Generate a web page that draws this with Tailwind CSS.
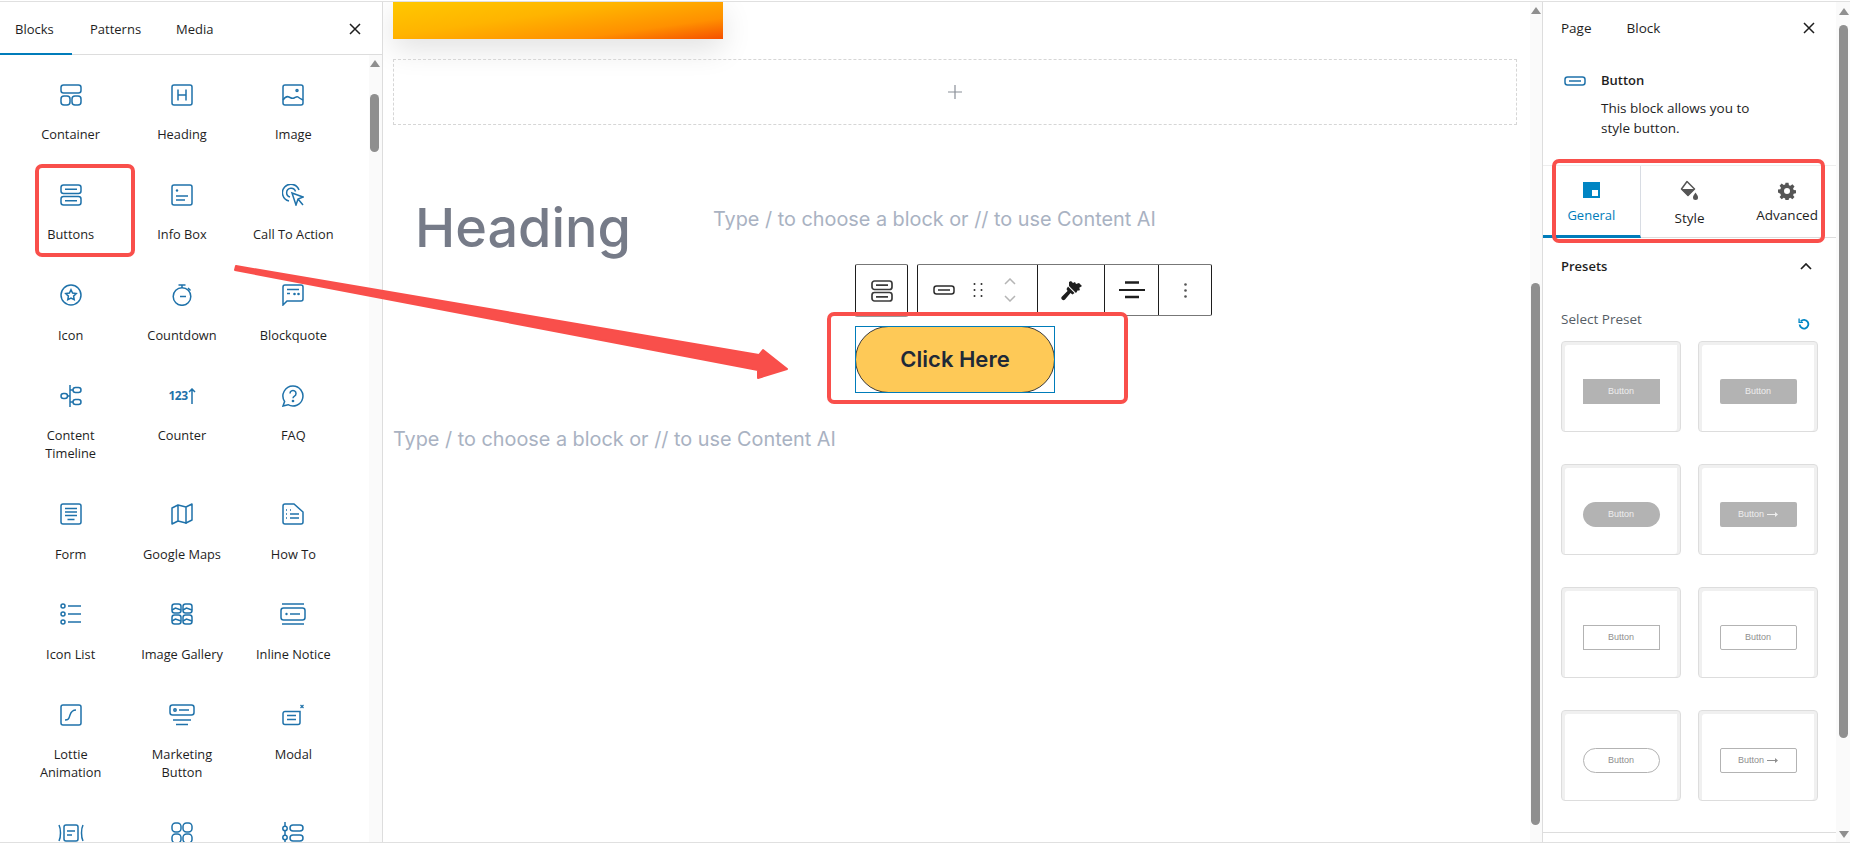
<!DOCTYPE html>
<html lang="en">
<head>
  <meta charset="UTF-8" />
  <title>Button block editor</title>
  <script src="https://cdn.jsdelivr.net/npm/@tailwindcss/browser@4"></script>
</head>
<body class="bg-white">
<div class="relative w-[1850px] h-[847px] overflow-hidden bg-white font-['Open_Sans',sans-serif] text-[13px] leading-[17px] text-[#1e1e1e]">

  <div class="flex h-[842px] mt-px border-t border-b border-[#e0e0e0]">

    <!-- left: block inserter -->
    <aside class="w-[383px] shrink-0 flex flex-col border-r border-[#ddd]">
      <div class="h-[53px] shrink-0 flex border-b border-[#ddd] relative">
        <div class="w-[72px] pl-[15px] pt-[19px] border-b-2 border-[#007cba] h-[53px]">Blocks</div>
        <div class="ml-[18px] pt-[19px]">Patterns</div>
        <div class="ml-[35px] pt-[19px]">Media</div>
        <svg class="absolute left-[349px] top-[21px] w-3 h-3" viewBox="0 0 12 12" fill="none" stroke="#1e1e1e" stroke-width="1.5"><path d="M1 1l10 10M11 1L1 11"/></svg>
      </div>
      <div class="flex flex-1 min-h-0">
        <div class="flex-1 overflow-hidden">
          <div class="grid grid-cols-3 pl-[15px] pr-[20px] pt-[28.5px] gap-y-[40.9px] leading-[18px] text-[12.8px]">
            <div class="flex flex-col items-center text-center">
              <svg class="w-[22px] h-[22px] mb-[19.5px]" viewBox="0 0 22 22" fill="none" stroke="#1f72aa" stroke-width="1.5"><rect x="1" y="1" width="20" height="8" rx="2.5"/><rect x="1" y="12" width="9" height="9" rx="3"/><rect x="12" y="12" width="9" height="9" rx="3"/></svg>
              <span>Container</span>
            </div>
            <div class="flex flex-col items-center text-center">
              <svg class="w-[22px] h-[22px] mb-[19.5px]" viewBox="0 0 22 22" fill="none" stroke="#1f72aa" stroke-width="1.5"><rect x="1" y="1" width="20" height="20" rx="2"/><path d="M7 5.5v11M15 5.5v11M7 11h8"/></svg>
              <span>Heading</span>
            </div>
            <div class="flex flex-col items-center text-center">
              <svg class="w-[22px] h-[22px] mb-[19.5px]" viewBox="0 0 22 22" fill="none" stroke="#1f72aa" stroke-width="1.5"><rect x="1" y="1" width="20" height="20" rx="2"/><circle cx="15" cy="6.5" r="1"/><path d="M1 16c2-3 4-4 6-3s3 2 5 1 3-2 4-1 3 2 5 3"/></svg>
              <span>Image</span>
            </div>

            <div class="flex flex-col items-center text-center">
              <svg class="w-[22px] h-[22px] mb-[19.5px]" viewBox="0 0 22 22" fill="none" stroke="#1f72aa" stroke-width="1.5"><rect x="1" y="1" width="20" height="8.5" rx="2.5"/><rect x="1" y="12.5" width="20" height="8.5" rx="2.5"/><path d="M5 5.2h12M5 16.8h12"/></svg>
              <span>Buttons</span>
            </div>
            <div class="flex flex-col items-center text-center">
              <svg class="w-[22px] h-[22px] mb-[19.5px]" viewBox="0 0 22 22" fill="none" stroke="#1f72aa" stroke-width="1.5"><rect x="1" y="1" width="20" height="20" rx="2"/><circle cx="6" cy="6.5" r="1.2" fill="#1f72aa" stroke="none"/><path d="M5 12h12M5 16h9"/></svg>
              <span>Info Box</span>
            </div>
            <div class="flex flex-col items-center text-center">
              <svg class="w-[22px] h-[22px] mb-[19.5px]" viewBox="0 0 22 22" fill="none" stroke="#1f72aa" stroke-width="1.5"><path d="M7 17A8.5 8.5 0 1 1 17 6"/><path d="M8 13a4.5 4.5 0 1 1 5.5-5.5"/><path d="M10 9l11 4-5 2-2 6zM16 15l5 6"/></svg>
              <span>Call To Action</span>
            </div>

            <div class="flex flex-col items-center text-center">
              <svg class="w-[22px] h-[22px] mb-[19.5px]" viewBox="0 0 22 22" fill="none" stroke="#1f72aa" stroke-width="1.5"><circle cx="11" cy="11" r="10"/><path d="M11 5.8l1.6 3.3 3.6.5-2.6 2.5.6 3.6-3.2-1.7-3.2 1.7.6-3.6-2.6-2.5 3.6-.5z"/></svg>
              <span>Icon</span>
            </div>
            <div class="flex flex-col items-center text-center">
              <svg class="w-[22px] h-[22px] mb-[19.5px]" viewBox="0 0 22 22" fill="none" stroke="#1f72aa" stroke-width="1.5"><circle cx="11" cy="12.5" r="8.8"/><path d="M7.5 1h7M11 1v3M17 4l2.5 2.5M9 12.5h6"/></svg>
              <span>Countdown</span>
            </div>
            <div class="flex flex-col items-center text-center">
              <svg class="w-[22px] h-[22px] mb-[19.5px]" viewBox="0 0 22 22" fill="none" stroke="#1f72aa" stroke-width="1.5"><path d="M1 21V3a2 2 0 0 1 2-2h16a2 2 0 0 1 2 2v12a2 2 0 0 1-2 2H5z"/><path d="M5 5.5h12M5 9.500h3"/><circle cx="12.500" cy="10" r="1.300" fill="#1f72aa" stroke="none"/><circle cx="16.500" cy="10" r="1.300" fill="#1f72aa" stroke="none"/></svg>
              <span>Blockquote</span>
            </div>

            <div class="flex flex-col items-center text-center">
              <svg class="w-[22px] h-[22px] mb-[19.5px]" viewBox="0 0 22 22" fill="none" stroke="#1f72aa" stroke-width="1.5"><path d="M10 0v22"/><rect x="1" y="8.5" width="6.5" height="5" rx="2.5"/><path d="M7.5 11H10"/><rect x="13" y="2.5" width="8" height="5" rx="2.5"/><rect x="13" y="14.5" width="8" height="5" rx="2.5"/><path d="M10 5h3M10 17h3"/></svg>
              <span>Content<br>Timeline</span>
            </div>
            <div class="flex flex-col items-center text-center">
              <div class="h-[22px] mb-[19.5px] flex items-center text-[#1f72aa] font-bold text-[12px] leading-none tracking-[-0.5px]">123<svg class="w-2 h-[16px]" viewBox="0 0 8 16" fill="none" stroke="#1f72aa" stroke-width="1.5"><path d="M4 16V1M1 4l3-3 3 3"/></svg></div>
              <span>Counter</span>
            </div>
            <div class="flex flex-col items-center text-center">
              <svg class="w-[22px] h-[22px] mb-[19.5px]" viewBox="0 0 22 22" fill="none" stroke="#1f72aa" stroke-width="1.5"><path d="M11 1a10 10 0 1 1-5 18.7L1 21l1.6-4.500A10 10 0 0 1 11 1z"/><path d="M8 8.500a3 3 0 1 1 4.500 2.600c-1 .6-1.500 1-1.500 2.200"/><circle cx="11" cy="16" r=".6"/></svg>
              <span>FAQ</span>
            </div>

            <div class="flex flex-col items-center text-center">
              <svg class="w-[22px] h-[22px] mb-[19.5px]" viewBox="0 0 22 22" fill="none" stroke="#1f72aa" stroke-width="1.5"><rect x="1" y="1" width="20" height="20" rx="2"/><path d="M5 5.500h12M5 9h12M5 12.500h12M7.500 16.500h7"/></svg>
              <span>Form</span>
            </div>
            <div class="flex flex-col items-center text-center">
              <svg class="w-[22px] h-[22px] mb-[19.5px]" viewBox="0 0 22 22" fill="none" stroke="#1f72aa" stroke-width="1.5"><path d="M1 5l6-3 8 2 6-3v16l-6 3-8-2-6 3zM7 2v17M15 4v17" stroke-linejoin="round"/></svg>
              <span>Google Maps</span>
            </div>
            <div class="flex flex-col items-center text-center">
              <svg class="w-[22px] h-[22px] mb-[19.5px]" viewBox="0 0 22 22" fill="none" stroke="#1f72aa" stroke-width="1.5"><path d="M3 1h9l9 8v10a2 2 0 0 1-2 2H3a2 2 0 0 1-2-2V3a2 2 0 0 1 2-2z"/><path d="M4 7h1M8 7h1M4 11h1M8 11h9M4 15h1M8 15h9"/></svg>
              <span>How To</span>
            </div>

            <div class="flex flex-col items-center text-center">
              <svg class="w-[22px] h-[22px] mb-[19.5px]" viewBox="0 0 22 22" fill="none" stroke="#1f72aa" stroke-width="1.5"><circle cx="3" cy="3" r="2"/><circle cx="3" cy="11" r="2"/><circle cx="3" cy="19" r="2"/><path d="M8 3h13M8 11h13M8 19h13"/></svg>
              <span>Icon List</span>
            </div>
            <div class="flex flex-col items-center text-center">
              <svg class="w-[22px] h-[22px] mb-[19.5px]" viewBox="0 0 22 22" fill="none" stroke="#1f72aa" stroke-width="1.5"><rect x="1" y="1" width="9" height="9" rx="2.5"/><rect x="12" y="1" width="9" height="9" rx="2.5"/><rect x="1" y="12" width="9" height="9" rx="2.5"/><rect x="12" y="12" width="9" height="9" rx="2.5"/><path d="M1 7l3.500-2 5.500 2M12 7l3.500-2 5.500 2M1 18l3.500-2 5.500 2M12 18l3.500-2 5.500 2"/></svg>
              <span>Image Gallery</span>
            </div>
            <div class="flex flex-col items-center text-center">
              <svg class="w-[26px] h-[22px] mb-[19.5px]" viewBox="0 0 26 22" fill="none" stroke="#1f72aa" stroke-width="1.5"><path d="M2 1h22M2 21h22"/><rect x="1" y="5" width="24" height="12" rx="2.5"/><circle cx="6.500" cy="11" r="1.200" fill="#1f72aa" stroke="none"/><path d="M10 11h10"/></svg>
              <span>Inline Notice</span>
            </div>

            <div class="flex flex-col items-center text-center">
              <svg class="w-[22px] h-[22px] mb-[19.5px]" viewBox="0 0 22 22" fill="none" stroke="#1f72aa" stroke-width="1.5"><rect x="1" y="1" width="20" height="20" rx="2"/><path d="M5 16c4 0 4-2 5-5s2-5 6-5"/></svg>
              <span>Lottie<br>Animation</span>
            </div>
            <div class="flex flex-col items-center text-center">
              <svg class="w-[26px] h-[22px] mb-[19.5px]" viewBox="0 0 26 22" fill="none" stroke="#1f72aa" stroke-width="1.5"><rect x="1" y="1" width="24" height="10" rx="2.500"/><circle cx="6" cy="6" r="1.200"/><path d="M10 6h10M4 16h18M7 20.500h12"/></svg>
              <span>Marketing<br>Button</span>
            </div>
            <div class="flex flex-col items-center text-center">
              <svg class="w-[22px] h-[22px] mb-[19.5px]" viewBox="0 0 22 22" fill="none" stroke="#1f72aa" stroke-width="1.5"><path d="M18 7.500V18.500a2 2 0 0 1-2 2H3a2 2 0 0 1-2-2v-9a2 2 0 0 1 2-2z"/><path d="M5 11.500h9M5 15.500h9"/><path d="M18.500 1l3 3M21.500 1l-3 3" stroke-width="1.200"/></svg>
              <span>Modal</span>
            </div>

            <div class="flex flex-col items-center text-center">
              <svg class="w-[26px] h-[22px]" viewBox="0 0 26 22" fill="none" stroke="#1f72aa" stroke-width="1.5"><path d="M1 3c2 4 2 12 0 16M25 3c-2 4-2 12 0 16"/><rect x="6" y="3" width="14" height="16" rx="2"/><path d="M9 9h8M9 13h5"/></svg>
            </div>
            <div class="flex flex-col items-center text-center">
              <svg class="w-[22px] h-[22px]" viewBox="0 0 22 22" fill="none" stroke="#1f72aa" stroke-width="1.5"><rect x="1" y="1" width="9" height="9" rx="3.500"/><rect x="12" y="1" width="9" height="9" rx="3.500"/><rect x="1" y="12" width="9" height="9" rx="3.500"/><rect x="12" y="12" width="9" height="9" rx="3.500"/></svg>
            </div>
            <div class="flex flex-col items-center text-center">
              <svg class="w-[22px] h-[22px]" viewBox="0 0 22 22" fill="none" stroke="#1f72aa" stroke-width="1.5"><path d="M3 0v22"/><circle cx="3" cy="6.500" r="2.200" fill="#fff"/><circle cx="3" cy="15.500" r="2.200" fill="#fff"/><rect x="8" y="3" width="13" height="6" rx="3"/><rect x="8" y="13" width="13" height="6" rx="3"/></svg>
            </div>
          </div>
        </div>
        <!-- left scrollbar -->
        <div class="w-[13px] shrink-0 bg-[#fafafa] relative">
          <svg class="absolute left-[1px] top-[5px] w-[10px] h-[7px]" viewBox="0 0 10 7" fill="#8f8f8f"><path d="M5 0l5 7H0z"/></svg>
          <div class="absolute left-[1px] top-[39px] w-[9px] h-[58px] rounded-full bg-[#8f8f8f]"></div>
        </div>
      </div>
    </aside>

    <!-- center: editor canvas -->
    <main class="w-[1159px] shrink-0 flex">
      <div class="w-[1147px] pl-[10px] overflow-hidden">
        <div class="w-[330px] h-[37px] shadow-[0_10px_30px_rgba(0,0,0,0.12)] bg-[linear-gradient(172deg,#ffc800_0%,#ffb400_40%,#ff9000_75%,#f55000_100%)]"></div>
        <div class="mt-[20px] w-[1124px] h-[66px] border border-dashed border-[#d6d6d6] flex items-center justify-center">
          <svg class="w-[14px] h-[14px]" viewBox="0 0 14 14" fill="none" stroke="#8a8f98" stroke-width="1.200"><path d="M7 0v14M0 7h14"/></svg>
        </div>
        <div class="flex items-start pl-[22px] pt-[72px] h-[139px] font-['Inter',sans-serif]">
          <h2 class="text-[54px] leading-[62px] font-medium text-[#767b88] w-[298px] shrink-0">Heading</h2>
          <p class="text-[19.83px] leading-[28px] text-[#a9b2c2] pt-[8px]">Type / to choose a block or // to use Content AI</p>
        </div>
        <!-- block toolbar -->
        <div class="flex items-start ml-[462px] gap-[9px]">
          <div class="w-[53px] h-[53px] border border-[#1e1e1e] border-t-[#777] border-b-[#999] rounded-[2px] flex items-center justify-center">
            <svg class="w-[22px] h-[22px]" viewBox="0 0 22 22" fill="none" stroke="#3b3b3b" stroke-width="1.700"><rect x="1" y="1" width="20" height="8.500" rx="2.500"/><rect x="1" y="12.500" width="20" height="8.500" rx="2.500"/><path d="M5 5.200h12M5 16.800h12"/></svg>
          </div>
          <div class="w-[295px] h-[52px] border border-[#1e1e1e] border-t-[#777] border-b-[#777] rounded-[2px] flex">
            <div class="w-[120px] flex items-center pl-[15px] border-r border-[#1e1e1e]">
              <svg class="w-[22px] h-[10px]" viewBox="0 0 22 10" fill="none" stroke="#2b2b2b" stroke-width="1.500"><rect x="1" y="1" width="20" height="8" rx="2.500"/><path d="M5 5h12"/></svg>
              <svg class="ml-[18px] w-[10px] h-[16px]" viewBox="0 0 10 16" fill="#2b2b2b"><circle cx="1.500" cy="2" r="1"/><circle cx="8.500" cy="2" r="1"/><circle cx="1.500" cy="8" r="1"/><circle cx="8.500" cy="8" r="1"/><circle cx="1.500" cy="14" r="1"/><circle cx="8.500" cy="14" r="1"/></svg>
              <svg class="ml-[21px] w-[12px] h-[24px]" viewBox="0 0 12 24" fill="none" stroke="#b5b5b5" stroke-width="1.500"><path d="M1 6l5-5 5 5M1 18l5 5 5-5"/></svg>
            </div>
            <div class="w-[67px] flex items-center justify-center border-r border-[#1e1e1e]">
              <svg class="w-[21px] h-[21px]" viewBox="0 0 21 21" fill="#1e1e1e"><path d="M8 2l2-1 2 2 2-1 1 2 3-1 3 3-3 2 1 1-1 2-1-1-2 3-7-7zM7 6.500L13.500 13l-2 1.500-2-1.500-5.500 6.500a2 2 0 0 1-3-3L6.500 11 5.500 9z"/></svg>
            </div>
            <div class="w-[54px] flex items-center justify-center border-r border-[#1e1e1e]">
              <svg class="w-[26px] h-[18px]" viewBox="0 0 26 18" fill="none" stroke="#1e1e1e"><path d="M6 1.500h14M6 16h14" stroke-width="2.600"/><path d="M0 9h26" stroke-width="2"/></svg>
            </div>
            <div class="flex-1 flex items-center justify-center">
              <svg class="w-[3px] h-[15px]" viewBox="0 0 3 15" fill="#555"><circle cx="1.500" cy="1.500" r="1.300"/><circle cx="1.500" cy="7.500" r="1.300"/><circle cx="1.500" cy="13.500" r="1.300"/></svg>
            </div>
          </div>
        </div>
        <div class="ml-[462px] mt-[9px] w-[200px] h-[67px] outline outline-[#007cba] -outline-offset-1">
          <button class="w-full h-full rounded-full bg-[#fec957] border border-[#3a3a3a] font-['Inter',sans-serif] font-semibold text-[22px] text-[#1f2937]">Click Here</button>
        </div>
        <p class="mt-[32px] font-['Inter',sans-serif] text-[19.83px] leading-[28px] text-[#a9b2c2]">Type / to choose a block or // to use Content AI</p>
      </div>
      <!-- center scrollbar -->
      <div class="w-[12px] shrink-0 bg-[#fafafa] relative">
        <svg class="absolute left-[1px] top-[5px] w-[10px] h-[7px]" viewBox="0 0 10 7" fill="#8f8f8f"><path d="M5 0l5 7H0z"/></svg>
        <div class="absolute left-[1px] top-[281px] w-[9px] h-[542px] rounded-full bg-[#8f8f8f]"></div>
      </div>
    </main>

    <!-- right: block settings -->
    <aside class="flex-1 flex border-l border-[#ddd] min-w-0">
      <div class="w-[293px] shrink-0 flex flex-col">
        <div class="h-[54px] flex relative pl-[18px] pt-[18px] text-[13.5px]">
          <span>Page</span>
          <span class="ml-[35px]">Block</span>
          <svg class="absolute left-[260px] top-[20px] w-3 h-3" viewBox="0 0 12 12" fill="none" stroke="#1e1e1e" stroke-width="1.500"><path d="M1 1l10 10M11 1L1 11"/></svg>
        </div>
        <div class="h-[110px] flex pl-[21px] pt-[16px] border-b border-[#eee]">
          <svg class="w-[22px] h-[10px] mt-[4px] shrink-0" viewBox="0 0 22 10" fill="none" stroke="#1f72aa" stroke-width="1.500"><rect x="1" y="1" width="20" height="8" rx="2.500"/><path d="M5 5h12"/></svg>
          <div class="ml-[15px]">
            <div class="font-semibold">Button</div>
            <p class="mt-[9px] leading-[20px] text-[13.5px]">This block allows you to<br>style button.</p>
          </div>
        </div>
        <div class="h-[72px] grid grid-cols-3 border-b border-[#ddd] relative">
          <div class="flex flex-col items-center border-r border-[#d8dce3] border-b-[3px] border-b-[#007cba] h-[72px] pt-[16px] text-[#007cba]">
            <svg class="w-[17px] h-[16px]" viewBox="0 0 17 16"><rect width="17" height="16" fill="#0085c3"/><rect x="9" y="8" width="6" height="6" fill="#fff"/></svg>
            <span class="mt-[9px]">General</span>
          </div>
          <div class="flex flex-col items-center pt-[14px] text-[13.5px]">
            <svg class="w-[20px] h-[21px]" viewBox="0 0 20 21" fill="#555"><path d="M8 1.500L15.500 9 9 15.500 2.500 9z" fill="none" stroke="#555" stroke-width="1.500" stroke-linejoin="round"/><path d="M2.500 9h13L9 15.500z"/><path d="M16.500 12.500c1.500 2 2.500 3.500 2.500 5a2.500 2.500 0 0 1-5 0c0-1.500 1-3 2.500-5z"/></svg>
            <span class="mt-[9px]">Style</span>
          </div>
          <div class="flex flex-col items-center pt-[16px] text-[13.5px]">
            <svg class="w-[18px] h-[18px]" viewBox="0 0 24 24" fill="#555"><path fill-rule="evenodd" d="M14 1l.6 3.200 1.900.8 2.700-1.900 2.800 2.800-1.900 2.700.8 1.900 3.100.5v4l-3.100.6-.8 1.900 1.900 2.600-2.800 2.800-2.700-1.800-1.900.8-.6 3.100h-4l-.5-3.100-1.900-.8-2.700 1.800-2.800-2.800 1.900-2.600-.8-1.900L0 14v-4l3.200-.5.8-1.900-1.900-2.700 2.800-2.800 2.700 1.900 1.900-.8L10 1zM12 8a4 4 0 1 0 0 8 4 4 0 0 0 0-8z"/></svg>
            <span class="mt-[7px]">Advanced</span>
          </div>
        </div>
        <div class="h-[56px] flex items-center justify-between pl-[18px] pr-[24px] font-semibold">
          <span>Presets</span>
          <svg class="w-[12px] h-[7px]" viewBox="0 0 12 7" fill="none" stroke="#1e1e1e" stroke-width="1.700"><path d="M1 6l5-5 5 5"/></svg>
        </div>
        <div class="flex justify-between pl-[18px] pr-[26px] pt-[17px] h-[47px] text-[#555d66] text-[13.5px]">
          <span>Select Preset</span>
          <svg class="w-[12px] h-[12px] mt-[7px]" viewBox="0 0 11 11" fill="none" stroke="#0085c3" stroke-width="1.700"><path d="M2.500 3A4 4 0 1 1 1.500 6"/><path d="M1 .5v3.500h3.500" stroke-width="1.200"/></svg>
        </div>
        <div class="grid grid-cols-[120px_120px] gap-x-[17px] gap-y-[32px] pl-[18px] font-['Liberation_Sans',sans-serif] text-[9px] leading-none">
          <div class="h-[91px] rounded-[4px] border border-[#ddd] flex justify-center pt-[37px] shadow-[inset_3px_3px_0_#f0f0f0,inset_-3px_0_0_#f0f0f0]">
            <div class="w-[77px] h-[25px] bg-[#b3b3b3] text-[#eee] flex items-center justify-center">Button</div>
          </div>
          <div class="h-[91px] rounded-[4px] border border-[#ddd] flex justify-center pt-[37px] shadow-[inset_3px_3px_0_#f0f0f0,inset_-3px_0_0_#f0f0f0]">
            <div class="w-[77px] h-[25px] bg-[#b3b3b3] rounded-[2px] text-[#eee] flex items-center justify-center">Button</div>
          </div>
          <div class="h-[91px] rounded-[4px] border border-[#ddd] flex justify-center pt-[37px] shadow-[inset_3px_3px_0_#f0f0f0,inset_-3px_0_0_#f0f0f0]">
            <div class="w-[77px] h-[25px] bg-[#b3b3b3] rounded-full text-[#eee] flex items-center justify-center">Button</div>
          </div>
          <div class="h-[91px] rounded-[4px] border border-[#ddd] flex justify-center pt-[37px] shadow-[inset_3px_3px_0_#f0f0f0,inset_-3px_0_0_#f0f0f0]">
            <div class="w-[77px] h-[25px] bg-[#b3b3b3] rounded-[2px] text-[#eee] flex items-center justify-center gap-[3px]">Button<svg class="w-[11px] h-[5px]" viewBox="0 0 11 5" fill="#eee"><path d="M0 2h8V0l3 2.500L8 5V3H0z"/></svg></div>
          </div>
          <div class="h-[91px] rounded-[4px] border border-[#ddd] flex justify-center pt-[37px] shadow-[inset_3px_3px_0_#f0f0f0,inset_-3px_0_0_#f0f0f0]">
            <div class="w-[77px] h-[25px] border border-[#b3b3b3] text-[#8f8f8f] flex items-center justify-center">Button</div>
          </div>
          <div class="h-[91px] rounded-[4px] border border-[#ddd] flex justify-center pt-[37px] shadow-[inset_3px_3px_0_#f0f0f0,inset_-3px_0_0_#f0f0f0]">
            <div class="w-[77px] h-[25px] border border-[#b3b3b3] rounded-[2px] text-[#8f8f8f] flex items-center justify-center">Button</div>
          </div>
          <div class="h-[91px] rounded-[4px] border border-[#ddd] flex justify-center pt-[37px] shadow-[inset_3px_3px_0_#f0f0f0,inset_-3px_0_0_#f0f0f0]">
            <div class="w-[77px] h-[25px] border border-[#b3b3b3] rounded-full text-[#8f8f8f] flex items-center justify-center">Button</div>
          </div>
          <div class="h-[91px] rounded-[4px] border border-[#ddd] flex justify-center pt-[37px] shadow-[inset_3px_3px_0_#f0f0f0,inset_-3px_0_0_#f0f0f0]">
            <div class="w-[77px] h-[25px] border border-[#b3b3b3] rounded-[2px] text-[#8f8f8f] flex items-center justify-center gap-[3px]">Button<svg class="w-[11px] h-[5px]" viewBox="0 0 11 5" fill="#8f8f8f"><path d="M0 2h8V0l3 2.500L8 5V3H0z"/></svg></div>
          </div>
        </div>
        <div class="mt-[31px] border-t border-[#ddd]"></div>
      </div>
      <!-- right scrollbar -->
      <div class="flex-1 bg-[#fafafa] relative">
        <svg class="absolute left-[3px] top-[6px] w-[10px] h-[7px]" viewBox="0 0 10 7" fill="#8f8f8f"><path d="M5 0l5 7H0z"/></svg>
        <div class="absolute left-[3px] top-[23px] w-[9px] h-[713px] rounded-full bg-[#8f8f8f]"></div>
        <svg class="absolute left-[3px] bottom-[4px] w-[10px] h-[7px]" viewBox="0 0 10 7" fill="#8f8f8f"><path d="M5 7L0 0h10z"/></svg>
      </div>
    </aside>
  </div>

  <!-- red annotations drawn on top of the screenshot -->
  <div class="absolute left-[35px] top-[164px] w-[100px] h-[93px] border-[4px] border-[#f94f4b] rounded-[7px]"></div>
  <div class="absolute left-[827px] top-[312px] w-[301px] h-[92px] border-[4px] border-[#f94f4b] rounded-[7px]"></div>
  <div class="absolute left-[1552px] top-[159px] w-[273px] h-[84px] border-[4px] border-[#f94f4b] rounded-[7px]"></div>
  <svg class="absolute left-0 top-0 w-[1850px] h-[847px] pointer-events-none" viewBox="0 0 1850 847" fill="#f94f4b" stroke="#f94f4b" stroke-width="2" stroke-linejoin="round"><path d="M236 266L759 355 763 350 787 369 758 378 758 370 235 270z"/></svg>
</div>
</body>
</html>
